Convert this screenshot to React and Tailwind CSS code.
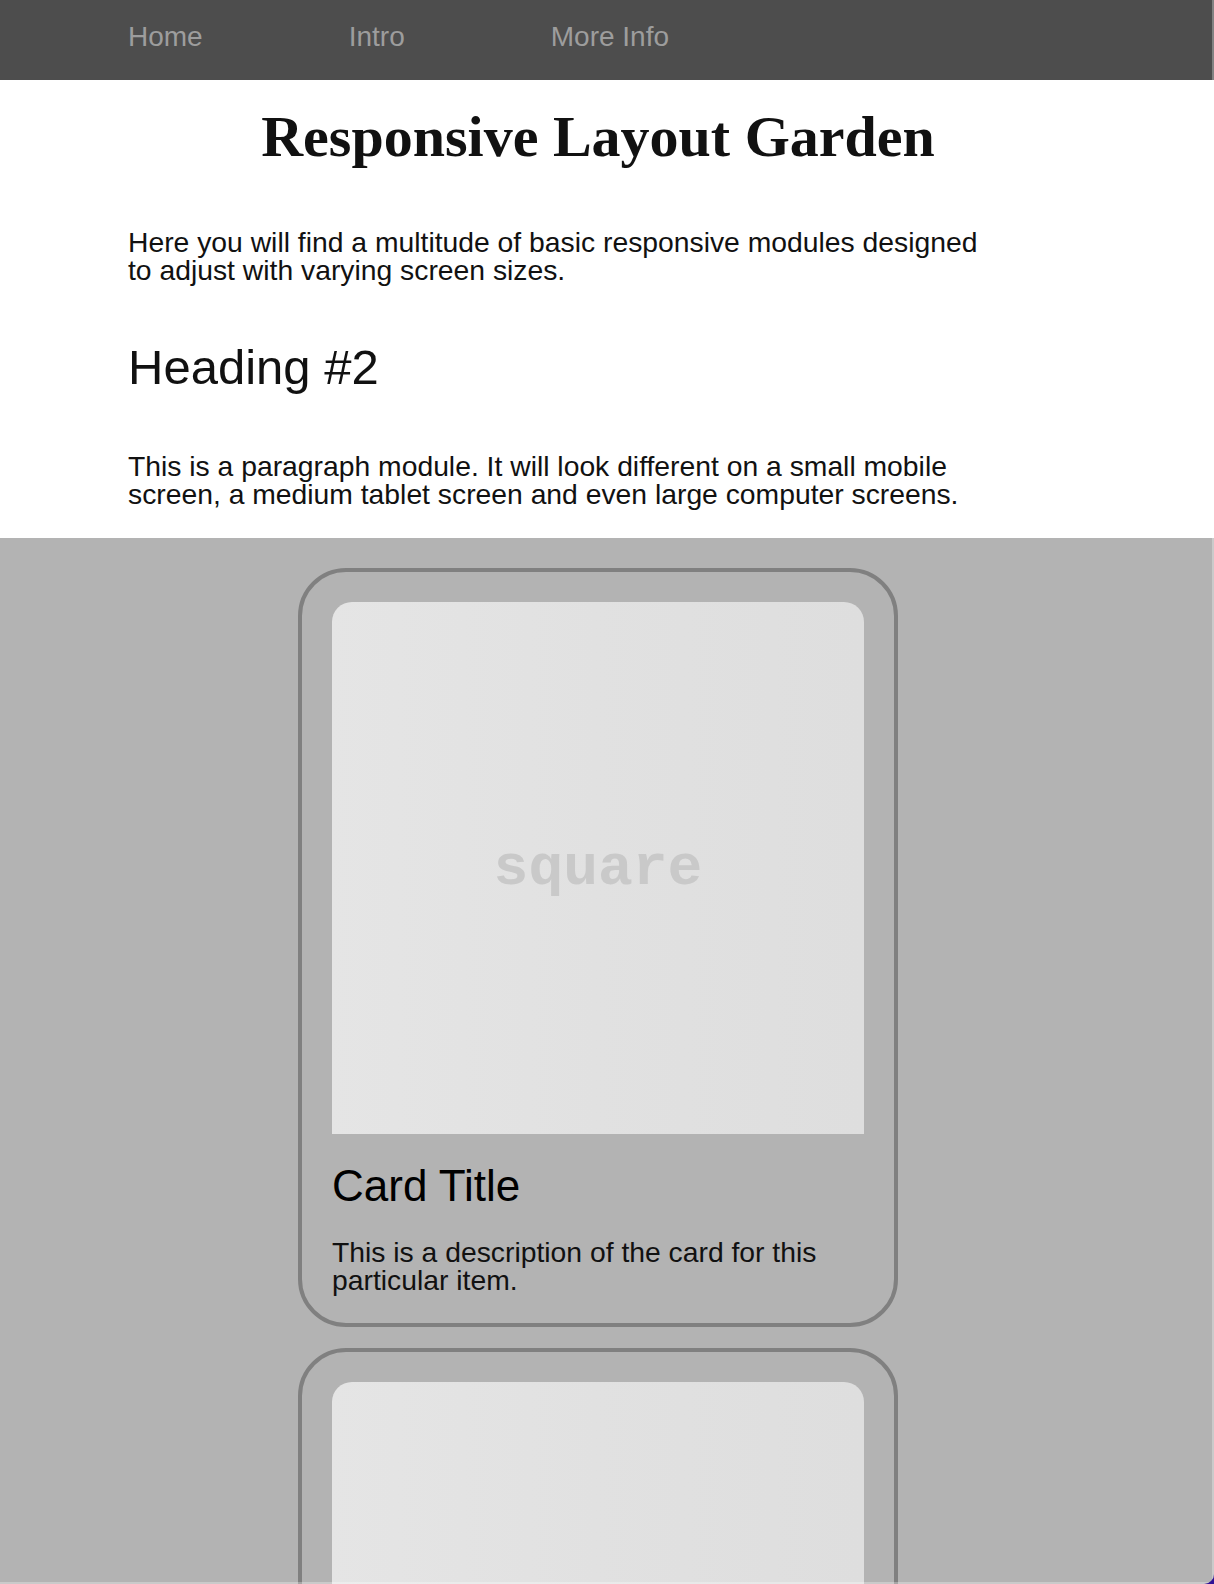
export default function App() {
  return (
    <div className="relative w-[1214px] h-[1584px] overflow-hidden bg-[#2f1296] font-['Liberation_Sans',Arial,sans-serif]">
      <div className="relative h-full w-full overflow-hidden rounded-br-[10px] bg-[#b3b3b3]">
        <nav className="h-[80px] bg-[#4d4d4d] flex gap-[146px] pl-[128px] pt-[23px] text-[28px] leading-[28px] text-[#9d9d9d]">
          <span>Home</span>
          <span>Intro</span>
          <span>More Info</span>
        </nav>

        <section className="bg-white pt-[28px] pb-[30px] text-[#111]">
          <h1 className="w-[1196px] text-center text-[58px] leading-[58px] font-bold font-['Liberation_Serif','Times_New_Roman',serif]">
            Responsive Layout Garden
          </h1>
          <div className="pl-[128px]">
            <p className="mt-[62px] max-w-[872px] text-[28.3px] leading-[28px]">
              Here you will find a multitude of basic responsive modules designed to adjust with varying screen sizes.
            </p>
            <h2 className="mt-[59px] text-[49px] leading-[49px] font-normal">Heading #2</h2>
            <p className="mt-[60px] max-w-[872px] text-[28.3px] leading-[28px]">
              This is a paragraph module. It will look different on a small mobile screen, a medium tablet screen and even large computer screens.
            </p>
          </div>
        </section>

        <section className="pt-[30px]">
          <div className="w-[1196px] flex flex-col items-center gap-[21px]">
            <div className="w-[600px] shrink-0 rounded-[48px] border-[4px] border-[#808080] px-[30px] pt-[30px] pb-[29px] text-[#111]">
              <div className="flex h-[532px] w-[532px] items-center justify-center rounded-t-[20px] bg-linear-to-r from-[#e5e5e5] via-[#e1e1e1] to-[#dedede]">
                <span className="font-['Liberation_Mono','Courier_New',monospace] text-[58px] font-bold text-[#c9c9c9]">
                  square
                </span>
              </div>
              <h3 className="mt-[30px] text-[44px] leading-[44px] font-normal text-black">Card Title</h3>
              <p className="mt-[30px] text-[28.3px] leading-[28px]">
                This is a description of the card for this particular item.
              </p>
            </div>
            <div className="w-[600px] shrink-0 rounded-[48px] border-[4px] border-[#808080] px-[30px] pt-[30px] pb-[28px]">
              <div className="h-[532px] w-[532px] rounded-t-[20px] bg-linear-to-r from-[#e5e5e5] via-[#e1e1e1] to-[#dedede]" />
            </div>
          </div>
        </section>

        <div className="absolute right-0 top-0 h-full w-[2px] bg-white/30" />
        <div className="absolute bottom-0 left-0 h-[2px] w-full bg-white/30" />
      </div>
    </div>
  );
}
